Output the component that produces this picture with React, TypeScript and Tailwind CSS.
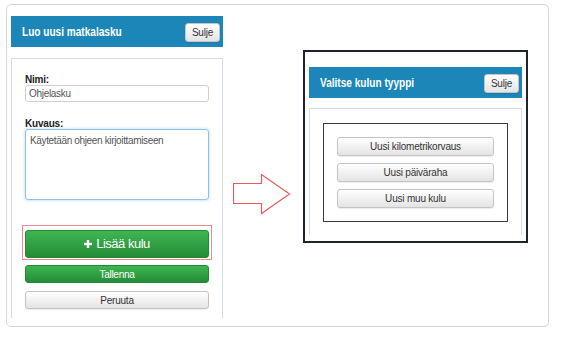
const font = { fontFamily: '"Liberation Sans", Arial, sans-serif' };

const GrayButton = ({ label, className = "" }: { label: string; className?: string }) => {
  return (
    <button
      className={`flex items-center justify-center rounded-[3px] border border-[#c4c4c4] bg-linear-to-b from-[#ffffff] to-[#e4e4e4] text-[10px] tracking-[-0.2px] text-[#333] shadow-[0_1px_1px_rgba(0,0,0,0.08)] ${className}`}
    >
      {label}
    </button>
  );
};

const Header = ({ title }: { title: string }) => {
  return (
    <div className="flex h-[31px] items-center justify-between bg-[#1b86b7] pl-[11px] pr-[3px]">
      <span className="inline-block origin-left scale-x-[0.84] text-[12px] font-bold text-white">{title}</span>
      <GrayButton label="Sulje" className="mt-[2px] h-[19px] w-[35px]" />
    </div>
  );
};

const Arrow = () => {
  return (
    <svg width="58" height="41" viewBox="0 0 58 41" className="mt-[158px] ml-[10px]">
      <polygon
        points="0.5,9.5 28.5,9.5 28.5,0.5 56.5,20 28.5,39.5 28.5,29.5 0.5,29.5"
        fill="#ffffff"
        stroke="#e65c5c"
        strokeWidth="1.2"
      />
    </svg>
  );
};

export default function App() {
  return (
    <div className="h-[342px] w-[562px] bg-white pl-[6px] pt-[4px]" style={font}>
      <div className="flex h-[323px] w-[543px] rounded-[5px] border border-[#d6d6d6] pl-[4px] pt-[11px]">
        {/* left: form */}
        <div className="flex h-full w-[212px] flex-col pb-[8px]">
          <Header title="Luo uusi matkalasku" />
          <div className="mt-[11px] flex flex-1 flex-col border-x border-t border-[#d3dde6] px-[13px] pt-[15px]">
            <label className="text-[10px] font-bold leading-[11px] tracking-[-0.2px] text-[#222]">Nimi:</label>
            <div className="flex h-[17px] items-center rounded-[3px] border border-[#cfcfcf] px-[3px] text-[10px] tracking-[-0.3px] text-[#555]">
              Ohjelasku
            </div>
            <label className="mt-[16px] text-[10px] font-bold leading-[11px] tracking-[-0.2px] text-[#222]">Kuvaus:</label>
            <div className="h-[71px] rounded-[3px] border border-[#8fc1e8] px-[4px] pt-[3px] text-[10px] tracking-[-0.35px] text-[#555] shadow-[0_0_3px_rgba(82,168,236,0.5)]">
              Käytetään ohjeen kirjoittamiseen
            </div>
            <div className="-mx-[3px] mt-[25px] border border-[#f08a8a] px-[2px] pt-[4px] pb-[1px]">
              <button className="flex h-[28px] w-full items-center justify-center gap-[4px] rounded-[3px] border border-[#23893a] bg-linear-to-b from-[#3fb652] to-[#238c37] text-[13px] tracking-[-0.5px] text-white">
                <svg width="8" height="8" viewBox="0 0 8 8">
                  <rect x="2.8" y="0" width="2.4" height="8" fill="white" />
                  <rect x="0" y="2.8" width="8" height="2.4" fill="white" />
                </svg>
                Lisää kulu
              </button>
            </div>
            <button className="mt-[5px] flex h-[18px] items-center justify-center rounded-[3px] border border-[#23893a] bg-linear-to-b from-[#3fb652] to-[#238c37] text-[10px] tracking-[-0.3px] text-white">
              Tallenna
            </button>
            <GrayButton label="Peruuta" className="mt-[8px] h-[18px]" />
          </div>
        </div>

        {/* arrow */}
        <div className="w-[80px]">
          <Arrow />
        </div>

        {/* right: screenshot of the type dialog */}
        <div className="mt-[34px] flex h-[193px] w-[225px] flex-col border-2 border-[#1d242b] bg-white px-[4px] pt-[15px] pb-[6px]">
          <Header title="Valitse kulun tyyppi" />
          <div className="mt-[10px] flex-1 border-x border-t border-[#d3dde6] px-[13px] pt-[14px]">
            <div className="flex flex-col gap-[7px] border border-[#3a3a3a] px-[13px] py-[13px]">
              <GrayButton label="Uusi kilometrikorvaus" className="h-[19px]" />
              <GrayButton label="Uusi päiväraha" className="h-[19px]" />
              <GrayButton label="Uusi muu kulu" className="h-[19px]" />
            </div>
          </div>
        </div>
      </div>
    </div>
  );
}
